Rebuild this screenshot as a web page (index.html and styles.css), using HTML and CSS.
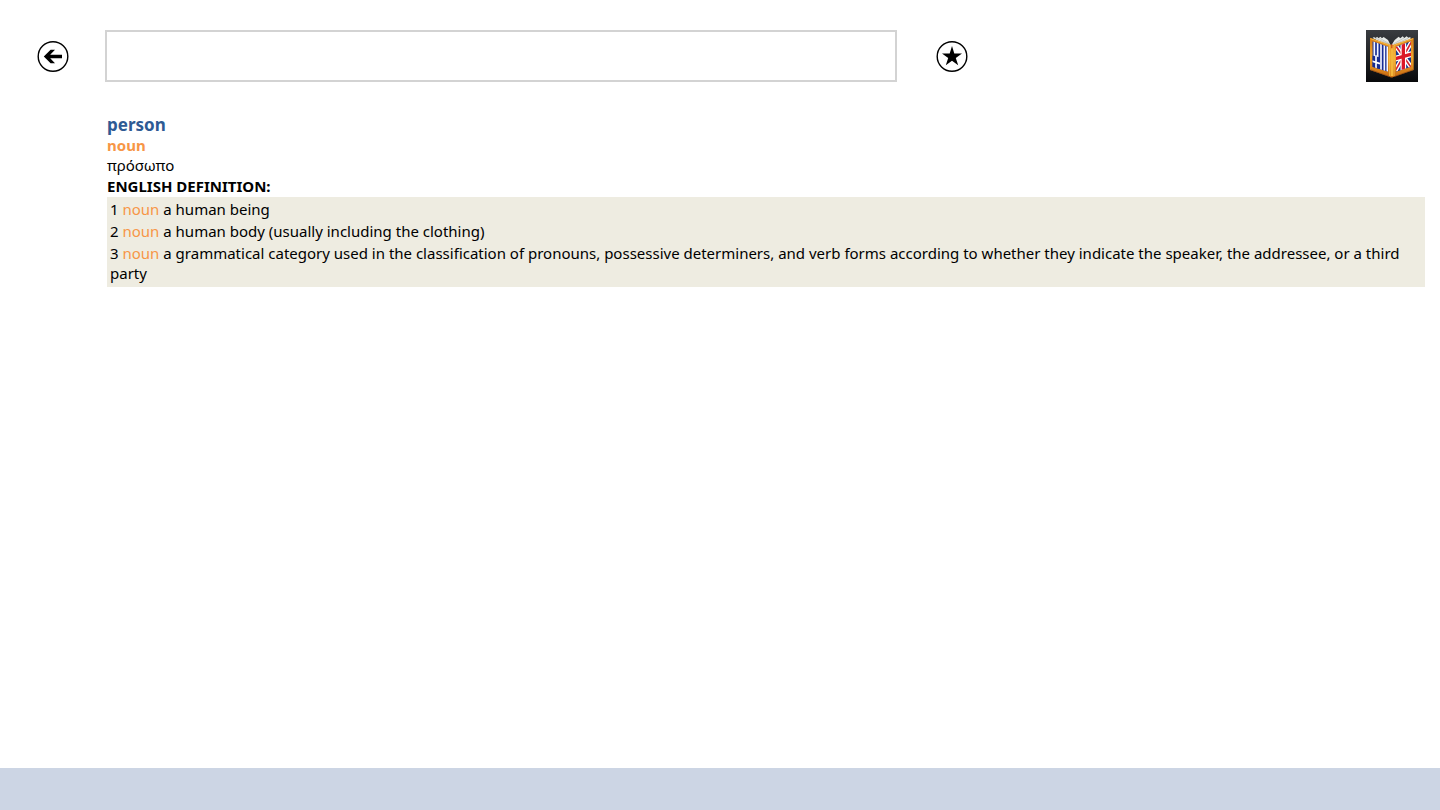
FILE: index.html
```html
<!DOCTYPE html>
<html lang="en">
<head>
<meta charset="utf-8">
<title>person – Greek English Dictionary</title>
<link rel="stylesheet" href="styles.css">
</head>
<body>
<header class="toolbar">
  <button class="round-button" type="button" aria-label="Back">
    <svg viewBox="0 -1 32 32" aria-hidden="true"><circle cx="16" cy="15.5" r="14.8" fill="none" stroke="#000" stroke-width="1.4"/><path d="M6.8 15.5 13.6 8.8H18L13.2 13.7H25V17.3H13.2L18 22.2H13.6Z"/></svg>
  </button>
  <input class="search" type="text" aria-label="Search word">
  <button class="round-button favourite" type="button" aria-label="Add to favourites">
    <svg viewBox="0 -1 32 32" aria-hidden="true"><circle cx="16" cy="15.5" r="14.8" fill="none" stroke="#000" stroke-width="1.4"/><path d="M16 5 18.3 12.4H26L19.8 16.9 22.2 24.2 16 19.7 9.8 24.2 12.2 16.9 6 12.4H13.7Z"/></svg>
  </button>
  <svg class="logo" viewBox="0 0 156 156" role="img" aria-label="Greek English dictionary">
    <defs>
      <linearGradient id="back" x2="0" y2="1"><stop stop-color="#393c40"/><stop offset="1" stop-color="#08090b"/></linearGradient>
      <linearGradient id="gold" x2="0" y2="1"><stop stop-color="#d77b16"/><stop offset=".5" stop-color="#efa52b"/><stop offset="1" stop-color="#c86b12"/></linearGradient>
      <clipPath id="greek"><path d="M19 34 66 50V125L19 110Z"/></clipPath>
      <clipPath id="british"><path d="M90 50 135 34V110L90 125Z"/></clipPath>
    </defs>
    <path fill="url(#back)" d="M0 0H156V156H0Z"/>
    <path fill="#e8ebe8" d="M20 24 24 21 29 25 33 20 38 25 43 20 48 25 53 21 66 30 75 48 86 30 98 20 103 25 110 19 115 24 122 19 127 23 133 21 134 29 78 55Z"/>
    <path fill="none" stroke="#b0b4ae" stroke-width="2" d="M27 24 70 43M40 24 73 43M114 24 82 42M126 25 84 44"/>
    <path fill="url(#gold)" d="M12 23 73 44H82L143 23V120L82 141Q77 144 72 141L12 120Z"/>
    <path fill="none" stroke="#ffd45a" stroke-width="2" d="M14 26 71 46V138M84 138V46L141 26"/>
    <path fill="none" stroke="#8f4612" stroke-width="2" d="M13 119 72 140M84 140 142 119"/>
    <path fill="#f3b63a" d="M74 46H81V138H74Z"/>
    <path fill="#c42a12" d="M76 43H79V55H76Z"/>
    <g clip-path="url(#greek)">
      <path fill="#172b92" d="M17 28H68V130H17Z"/>
      <path stroke="#f4f6ff" stroke-width="5" d="M25 28V80M35 30V84M45 34V130M55 38V130M64 40V130"/>
      <path fill="#172b92" d="M17 76 40 82V122L17 116Z"/>
      <path stroke="#fff" stroke-width="5" d="M17 93 42 101M30 76V122"/>
    </g>
    <g clip-path="url(#british)">
      <path fill="#16348c" d="M88 28H138V130H88Z"/>
      <path stroke="#fff" stroke-width="13" d="M88 46 137 114M88 122 137 35"/>
      <path stroke="#d52230" stroke-width="5" d="M88 46 137 114M88 122 137 35"/>
      <path stroke="#fff" stroke-width="17" d="M112 28V130M88 86 137 72"/>
      <path stroke="#db1729" stroke-width="10" d="M112 28V130M88 86 137 72"/>
    </g>
  </svg>
</header>
<main class="entry">
  <h1 class="headword">person</h1>
  <p class="part-of-speech">noun</p>
  <p class="translation" lang="el">πρόσωπο</p>
  <h2 class="section-title">ENGLISH DEFINITION:</h2>
  <div class="definitions">
    <p>1 <span class="pos">noun</span> a human being</p>
    <p>2 <span class="pos">noun</span> a human body (usually including the clothing)</p>
    <p>3 <span class="pos">noun</span> a grammatical category used in the classification of pronouns, possessive determiners, and verb forms according to whether they indicate the speaker, the addressee, or a third party</p>
  </div>
</main>
<footer class="bottom-bar"></footer>
</body>
</html>
```
FILE: styles.css
```css
* { box-sizing: border-box; }
body {
  margin: 0;
  min-height: 100vh;
  display: flex;
  flex-direction: column;
  background: #fff;
  color: #000;
  font: 15px/20px "Segoe UI", "Noto Sans", "Open Sans", sans-serif;
}
h1, h2, p { margin: 0; }
.toolbar {
  display: flex;
  align-items: center;
  padding: 30px 22px 0 37px;
}
.round-button {
  flex: none;
  width: 32px;
  height: 32px;
  padding: 0;
  border: 0;
  background: none;
}
.round-button svg { display: block; }
.search {
  flex: 0 1 792px;
  min-width: 0;
  height: 52px;
  margin-left: 36px;
  padding: 0 12px;
  border: 2px solid #d3d3d3;
  background: #fff;
  font: inherit;
}
.favourite { margin-left: 39px; }
.logo {
  flex: none;
  width: 52px;
  height: 52px;
  margin-left: auto;
}
.entry {
  flex: 1;
  padding: 33px 15px 24px 107px;
}
.headword {
  color: #2e5a94;
  font-size: 17px;
  line-height: 20px;
}
.part-of-speech {
  color: #f79646;
  font-weight: bold;
}
.section-title {
  font-size: 15px;
  line-height: 22px;
}
.definitions {
  display: flex;
  flex-direction: column;
  gap: 2px;
  padding: 2px 3px 4px;
  background: #eeece1;
}
.pos { color: #f79646; }
.bottom-bar {
  height: 42px;
  background: #ccd5e4;
}
```
